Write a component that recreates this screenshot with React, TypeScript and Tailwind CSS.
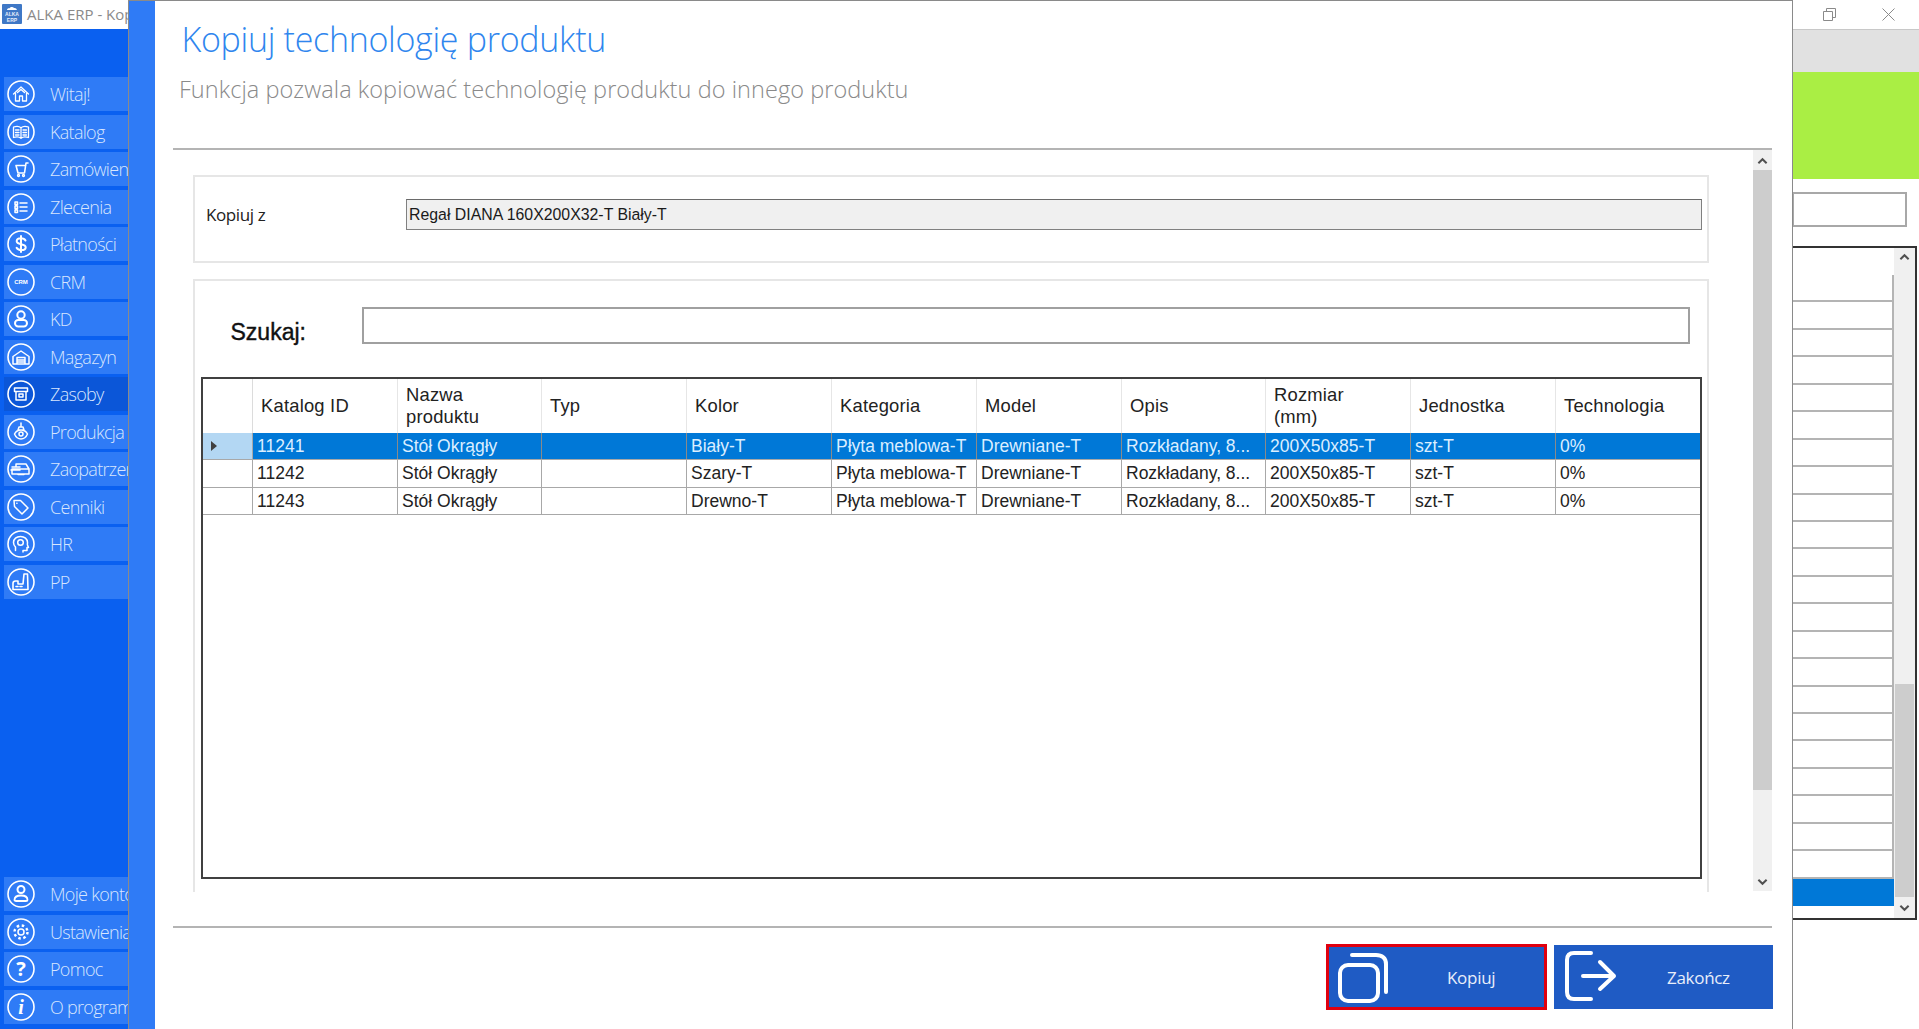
import type { ReactNode } from "react";

const Ico = ({ children }: { children: ReactNode }) => (
  <svg viewBox="0 0 28 28" className="absolute left-[7px] top-[3px] w-[28px] h-[28px]" fill="none" stroke="#fff" strokeWidth="1.3" strokeLinecap="round" strokeLinejoin="round">
    <circle cx="14" cy="14" r="13" strokeWidth="1.6" />
    {children}
  </svg>
);

const topItems: { label: string; icon: ReactNode; active?: boolean }[] = [
  { label: "Witaj!", icon: <path d="M6.500 14 14 7l7.500 7M8.500 13v8h4v-5h3v5h4v-8M10.500 12.500 14 9.500l3.500 3" /> },
  { label: "Katalog", icon: <path d="M6.500 9c3-1 5.800-.8 7.500.8 1.700-1.600 4.500-1.800 7.500-.8v10.500c-3-1-5.800-.8-7.500.8-1.700-1.600-4.500-1.800-7.500-.8zM14 9.800v10.500M8.500 12h3.500M8.500 14.500h3.500M8.500 17h3.500M16 12h3.500M16 14.500h3.500M16 17h3.500" /> },
  { label: "Zamówienia", icon: <><path d="M21 8h-2l-1.500 10h-6.500l-2-7.500h9.800" strokeWidth="1.600" /><circle cx="11.500" cy="20.500" r="1" /><circle cx="16.500" cy="20.500" r="1" /></> },
  { label: "Zlecenia", icon: <path d="M8 9h2.500v2.500H8zM8 13h2.500v2.500H8zM8 17h2.500v2.500H8zM13 10h7M13 14h7M13 18h7" strokeWidth="1.500" /> },
  { label: "Płatności", icon: <path d="M18.500 10.500c-.8-1.500-2.500-2.200-4.500-2.200-2.400 0-4.300 1.100-4.300 2.900 0 4 9 2 9 6 0 1.800-2 2.900-4.500 2.900-2.100 0-3.800-.8-4.600-2.300M14 6v16" strokeWidth="2" /> },
  { label: "CRM", icon: <text x="14" y="16" textAnchor="middle" fontSize="6" fontWeight="700" fontFamily="Liberation Sans" fill="#fff" stroke="none">CRM</text> },
  { label: "KD", icon: <><circle cx="14" cy="10" r="3.700" strokeWidth="2" /><rect x="8" y="15" width="12" height="6.500" rx="3.200" strokeWidth="2" /></> },
  { label: "Magazyn", icon: <path d="M6 13.500 14 8l8 5.500v7.500H6zM10 21v-6.500h8V21M10 17h8M10 19h8" strokeWidth="1.500" /> },
  { label: "Zasoby", active: true, icon: <path d="M7.500 8h13v3.500h-13zM9 11.500V20h10v-8.500M12 14h4v3h-4z" strokeWidth="1.500" /> },
  { label: "Produkcja", icon: <><path d="M14 5v4M12 9h4l1 3h-6zM7.500 16c1.500-3 3.500-4 6.500-4s5 1 6.500 4c-1.500 3.500-3.500 5-6.500 5s-5-1.500-6.500-5z" strokeWidth="1.500" /><circle cx="14" cy="16" r="2" strokeWidth="1.500" /></> },
  { label: "Zaopatrzenie", icon: <path d="M9 9h10l3 5v5H5v-5h17M5 12h8M4 15h9M9 9v3M11 19.500h6" strokeWidth="1.500" /> },
  { label: "Cenniki", icon: <path d="M7 7.500h6.500l7.500 7.500-6 6-7.500-7.500zM9.800 10.200h.2" strokeWidth="1.500" /> },
  { label: "HR", icon: <><path d="M8.500 20.500V17c-1.500-1.500-2-3-2-4.500C6.500 9 9.500 6.500 13.500 6.500c4 0 7 2.500 7 6 0 1-.2 1.800 0 2.500l1 2.500h-1.500v3h-4v1.500" strokeWidth="1.500" /><circle cx="13.500" cy="12.500" r="2.800" strokeWidth="1.500" /></> },
  { label: "PP", icon: <path d="M6 21.500v-6c0-1.500 1-2.500 2.500-2.500h2.500v3h5l1-10h3.500l.5 15.500zM9 18.500h2M13 18.500h2" strokeWidth="1.600" /> },
];

const bottomItems: { label: string; top: string; icon: ReactNode }[] = [
  { label: "Moje konto", top: "top-[877px]", icon: <><circle cx="14" cy="9.500" r="3.500" strokeWidth="2" /><path d="M7.500 20c0-3 2-4.500 6.500-4.500s6.500 1.500 6.500 4.500c0 .8-.8 1-1.500 1H9c-.7 0-1.500-.2-1.500-1z" strokeWidth="1.800" /></> },
  { label: "Ustawienia", top: "top-[915px]", icon: <><circle cx="14" cy="14" r="3" strokeWidth="1.500" /><circle cx="14" cy="14" r="6.500" strokeWidth="2.400" strokeDasharray="2.500 2.600" strokeLinecap="butt" /></> },
  { label: "Pomoc", top: "top-[952px]", icon: <text x="14" y="21" textAnchor="middle" fontSize="20" fontWeight="700" fontFamily="Open Sans" fill="#fff" stroke="none">?</text> },
  { label: "O programie", top: "top-[990px]", icon: <text x="14" y="21" textAnchor="middle" fontSize="20" fontWeight="700" fontStyle="italic" fontFamily="Liberation Serif" fill="#fff" stroke="none">i</text> },
];

const NavItem = ({ label, icon, active }: { label: string; icon: ReactNode; active?: boolean }) => (
  <div className={`relative h-[34px] w-[124px] ml-[4px] overflow-hidden ${active ? "bg-[#0b56d8]" : "bg-[#2f7bf6]"}`}>
    <div className="absolute -left-[4px] top-0">
      <div className="relative w-[50px] h-[34px]">
        <Ico>{icon}</Ico>
      </div>
    </div>
    <span className="absolute left-[46px] top-[4px] whitespace-nowrap text-[18px] leading-[26px] font-light text-[#d8e6fe] tracking-[-0.7px] [font-family:Open_Sans,sans-serif]">
      {label}
    </span>
  </div>
);

const columns = [
  { label: "Katalog ID", w: "w-[145px]" },
  { label: "Nazwa produktu", w: "w-[144px]" },
  { label: "Typ", w: "w-[145px]" },
  { label: "Kolor", w: "w-[145px]" },
  { label: "Kategoria", w: "w-[145px]" },
  { label: "Model", w: "w-[145px]" },
  { label: "Opis", w: "w-[144px]" },
  { label: "Rozmiar (mm)", w: "w-[145px]" },
  { label: "Jednostka", w: "w-[145px]" },
  { label: "Technologia", w: "w-[145px]" },
];

const rows = [
  ["11241", "Stół Okrągły", "", "Biały-T", "Płyta meblowa-T", "Drewniane-T", "Rozkładany, 8...", "200X50x85-T", "szt-T", "0%"],
  ["11242", "Stół Okrągły", "", "Szary-T", "Płyta meblowa-T", "Drewniane-T", "Rozkładany, 8...", "200X50x85-T", "szt-T", "0%"],
  ["11243", "Stół Okrągły", "", "Drewno-T", "Płyta meblowa-T", "Drewniane-T", "Rozkładany, 8...", "200X50x85-T", "szt-T", "0%"],
];

const Chevron = ({ up, className }: { up?: boolean; className: string }) => (
  <svg viewBox="0 0 12 8" className={className} fill="none" stroke="#505050" strokeWidth="2.200">
    <path d={up ? "M1.500 6.500 6 2l4.500 4.500" : "M1.500 1.500 6 6l4.500-4.500"} />
  </svg>
);

export default function App() {
  return (
    <div className="relative w-[1919px] h-[1029px] overflow-hidden bg-white [font-family:Liberation_Sans,Arial,sans-serif]">
      {/* okno w tle - lewa strona */}
      <div className="absolute left-0 top-0 w-[128px] h-[29px] bg-white overflow-hidden">
        <svg viewBox="0 0 20 20" className="absolute left-[2px] top-[4px] w-[20px] h-[20px]">
          <rect width="20" height="20" rx="1" fill="#3f78c6" />
          <path d="M5 6c0-1.500 1.500-2 2.500-1.700C8.200 3 11 2.500 12 4c1.800-.3 3 .8 2.800 2H5z" fill="#fff" />
          <text x="10" y="12" textAnchor="middle" fontSize="5" fontWeight="700" fontFamily="Liberation Sans" fill="#e6eefa">ALKA</text>
          <text x="10" y="18" textAnchor="middle" fontSize="5" fontWeight="700" fontFamily="Liberation Sans" fill="#e6eefa">ERP</text>
        </svg>
        <span className="absolute left-[27px] top-[4px] whitespace-nowrap text-[15px] leading-[20px] text-[#8a8a8a] [font-family:Open_Sans,sans-serif]">
          ALKA ERP - Kopiuj
        </span>
      </div>
      <div className="absolute left-0 top-[29px] w-[128px] h-[1000px] bg-[#0a60f0]" />
      <div className="absolute left-0 top-[77px] flex flex-col gap-[3.500px]">
        {topItems.map((item) => (
          <NavItem key={item.label} label={item.label} icon={item.icon} active={item.active} />
        ))}
      </div>
      {bottomItems.map((item) => (
        <div key={item.label} className={`absolute left-0 ${item.top}`}>
          <NavItem label={item.label} icon={item.icon} />
        </div>
      ))}

      {/* okno w tle - prawa strona */}
      <svg viewBox="0 0 13 13" className="absolute left-[1823px] top-[8px] w-[13px] h-[13px]" fill="none" stroke="#8a8a8a">
        <path d="M.5 3.500h9v9h-9zM3.500 3.500v-3h9v9h-3" />
      </svg>
      <svg viewBox="0 0 13 13" className="absolute left-[1882px] top-[8px] w-[13px] h-[13px]" fill="none" stroke="#8a8a8a">
        <path d="M.5.500l12 12M12.500.500l-12 12" />
      </svg>
      <div className="absolute left-[1792px] top-[29px] w-[127px] h-[43px] bg-[#e1e1e1] border-t border-[#c8c8c8]" />
      <div className="absolute left-[1792px] top-[72px] w-[127px] h-[107px] bg-[#aaee44]" />
      <div className="absolute left-[1792px] top-[192px] w-[115px] h-[35px] border-2 border-[#a8a8a8] bg-white" />
      <div className="absolute left-[1792px] top-[246px] w-[125px] h-[674px] border-t-2 border-r-2 border-b-2 border-[#333333] bg-white overflow-hidden">
        <div className="absolute left-0 top-[27px] w-[102px] flex flex-col">
          {Array.from({ length: 23 }).map((_, i) => (
            <div
              key={i}
              className={
                i === 22
                  ? "h-[27.450px] shrink-0 bg-[#0078d7]"
                  : "h-[27.450px] shrink-0 border-b-2 border-r-2 border-[#b4b4b4]"
              }
            />
          ))}
        </div>
        <div className="absolute right-0 top-0 w-[21px] h-full bg-[#f0f0f0]">
          <Chevron up className="absolute left-[5px] top-[5px] w-[11px] h-[8px]" />
          <div className="absolute left-[1px] top-[436px] w-[19px] h-[213px] bg-[#cdcdcd]" />
          <Chevron className="absolute left-[5px] top-[656px] w-[11px] h-[8px]" />
        </div>
      </div>

      {/* dialog */}
      <div className="absolute left-[128px] top-0 w-[1665px] h-[1029px] flex border-x border-t border-[#8a8a8a]">
        <div className="w-[26px] h-full bg-[#2f7bf6]" />
        <div className="relative flex-1 h-full bg-white">
          <h1 className="absolute left-[26.500px] top-[14px] whitespace-nowrap text-[34px] leading-[48px] font-light text-[#2f86ee] tracking-[-0.3px] [font-family:Open_Sans,sans-serif]">
            Kopiuj technologię produktu
          </h1>
          <p className="absolute left-[24px] top-[70px] whitespace-nowrap text-[23.500px] leading-[36px] text-[#8a8a8a] font-light tracking-[0.06px] [font-family:Open_Sans,sans-serif]">
            Funkcja pozwala kopiować technologię produktu do innego produktu
          </p>
          <div className="absolute left-[18px] top-[147px] w-[1599px] h-[2px] bg-[#b4b4b4]" />

          {/* Kopiuj z */}
          <div className="absolute left-[38px] top-[174px] w-[1516px] h-[88px] border-2 border-[#e6e6e6]">
            <span className="absolute left-[11px] top-[26px] text-[17px] leading-[24px] text-[#222222] [font-family:Open_Sans,sans-serif] tracking-[-0.4px]">
              Kopiuj z
            </span>
            <div className="absolute left-[211px] top-[22px] w-[1296px] h-[31px] bg-[#f0f0f0] border border-[#808080] border-t-[#6a6a6a] flex items-center pl-[2px]">
              <span className="text-[15.850px] text-[#1a1a1a]">Regał DIANA 160X200X32-T Biały-T</span>
            </div>
          </div>

          {/* Szukaj + tabela */}
          <div className="absolute left-[38px] top-[278px] w-[1516px] h-[613px] border-2 border-b-0 border-[#e6e6e6]" />
          <span className="absolute left-[75.500px] top-[317px] text-[23px] leading-[28px] text-[#111111] [-webkit-text-stroke:0.4px_#111111]">
            Szukaj:
          </span>
          <div className="absolute left-[207px] top-[306px] w-[1328px] h-[37px] border-2 border-[#a0a0a0] bg-white" />

          <div className="absolute left-[46px] top-[376px] w-[1501px] h-[502px] border-2 border-[#404040] bg-white overflow-hidden">
            <div className="flex h-[54px]">
              <div className="w-[50px] shrink-0 border-r border-[#dcdcdc]" />
              {columns.map((c) => (
                <div key={c.label} className={`${c.w} shrink-0 border-r border-[#e6e6e6] pl-[8px] pr-[30px] flex items-center text-[18.400px] leading-[22px] tracking-[0.2px] text-[#222222]`}>
                  {c.label}
                </div>
              ))}
            </div>
            {rows.map((row, r) => (
              <div key={row[0]} className="flex h-[27.330px] border-b border-[#a8a8a8]">
                <div className={`w-[50px] shrink-0 border-r border-[#a8a8a8] flex items-center pl-[8px] ${r === 0 ? "bg-[#b3d7f3]" : "bg-white"}`}>
                  {r === 0 && (
                    <svg viewBox="0 0 6 10" className="w-[6px] h-[10px]">
                      <path d="M0 0l6 5-6 5z" fill="#404040" />
                    </svg>
                  )}
                </div>
                {row.map((cell, i) => (
                  <div
                    key={i}
                    className={`${columns[i].w} shrink-0 border-r pl-[4px] flex items-center whitespace-nowrap text-[17.500px] leading-[22px] ${
                      r === 0 ? "bg-[#0078d7] text-[#dbeeff] border-[#8a8a8a]" : "text-[#222222] border-[#a8a8a8]"
                    }`}
                  >
                    {cell}
                  </div>
                ))}
              </div>
            ))}
          </div>

          {/* pasek przewijania */}
          <div className="absolute left-[1598px] top-[149px] w-[19px] h-[741px] bg-[#f0f0f0]">
            <Chevron up className="absolute left-[4px] top-[7px] w-[11px] h-[8px]" />
            <div className="absolute left-0 top-[20px] w-full h-[620px] bg-[#cdcdcd]" />
            <Chevron className="absolute left-[4px] top-[728px] w-[11px] h-[8px]" />
          </div>

          <div className="absolute left-[18px] top-[925px] w-[1599px] h-[2px] bg-[#b4b4b4]" />

          {/* przyciski */}
          <button className="absolute left-[1171px] top-[943px] w-[221px] h-[66px] bg-[#1f5bc4] border-[3px] border-[#e0000f]">
            <svg viewBox="0 0 52 52" className="absolute left-[8px] top-[4px] w-[52px] h-[52px]" fill="none" stroke="#fff" strokeWidth="4" strokeLinecap="round" strokeLinejoin="round">
              <rect x="3" y="14" width="38" height="36" rx="8" />
              <path d="M15 4h24c6 0 10 3 10 9v28" />
            </svg>
            <span className="absolute left-[118px] top-[19px] text-[17px] leading-[24px] text-[#e8eefa] [font-family:Open_Sans,sans-serif] tracking-[-0.3px]">
              Kopiuj
            </span>
          </button>
          <button className="absolute left-[1399px] top-[944px] w-[219px] h-[64px] bg-[#1f5bc4]">
            <svg viewBox="0 0 54 52" className="absolute left-[10px] top-[5px] w-[54px] h-[52px]" fill="none" stroke="#fff" strokeWidth="4" strokeLinecap="round" strokeLinejoin="round">
              <path d="M27 3H10C5 3 3 6 3 10v32c0 4 2 7 7 7h17" />
              <path d="M19 26h31M36 12l14 14-14 13" />
            </svg>
            <span className="absolute left-[113px] top-[21px] text-[17px] leading-[24px] text-[#e8eefa] [font-family:Open_Sans,sans-serif] tracking-[-0.3px]">
              Zakończ
            </span>
          </button>
        </div>
      </div>
    </div>
  );
}
